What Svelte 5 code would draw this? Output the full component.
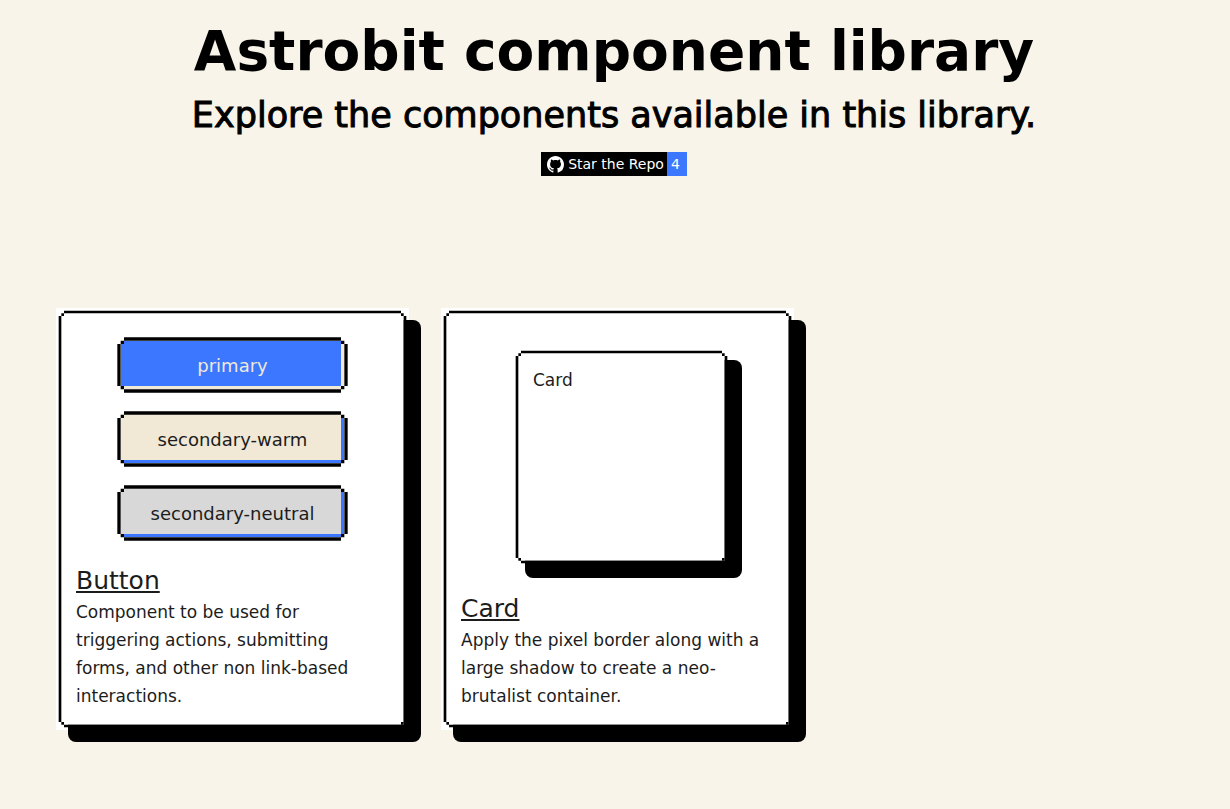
<script>
  const buttons = ['primary', 'secondary-warm', 'secondary-neutral'];
</script>

<main>
  <header>
    <h1>Astrobit component library</h1>
    <p class="lead">Explore the components available in this library.</p>
    <a class="badge" href="#repo">
      <span class="label">
        <svg viewBox="0 0 16 16" width="17" height="17" aria-hidden="true">
          <path fill="#fff" d="M8 0C3.58 0 0 3.58 0 8c0 3.54 2.29 6.53 5.47 7.59.4.07.55-.17.55-.38 0-.19-.01-.82-.01-1.49-2.01.37-2.53-.49-2.69-.94-.09-.23-.48-.94-.82-1.13-.28-.15-.68-.52-.01-.53.63-.01 1.08.58 1.23.82.72 1.21 1.87.87 2.33.66.07-.52.28-.87.51-1.07-1.78-.2-3.64-.89-3.64-3.95 0-.87.31-1.59.82-2.15-.08-.2-.36-1.02.08-2.12 0 0 .67-.21 2.2.82.64-.18 1.32-.27 2-.27s1.36.09 2 .27c1.53-1.04 2.2-.82 2.2-.82.44 1.1.16 1.92.08 2.12.51.56.82 1.27.82 2.15 0 3.07-1.87 3.75-3.65 3.95.29.25.54.73.54 1.48 0 1.07-.01 1.93-.01 2.2 0 .21.15.46.55.38A8.01 8.01 0 0 0 16 8c0-4.42-3.58-8-8-8z" />
        </svg>
        Star the Repo
      </span>
      <span class="count">4</span>
    </a>
  </header>

  <section class="grid">
    <article class="card">
      <div class="buttons">
        {#each buttons as name}
          <button class="pixel {name}" type="button">{name}</button>
        {/each}
      </div>
      <h2><a href="#button">Button</a></h2>
      <p class="description">Component to be used for triggering actions, submitting forms, and other non link-based interactions.</p>
    </article>

    <article class="card">
      <div class="nested">
        <div class="card small">Card</div>
      </div>
      <h2><a href="#card">Card</a></h2>
      <p class="description">Apply the pixel border along with a large shadow to create a neo-brutalist container.</p>
    </article>
  </section>
</main>

<style>
  :global(body) {
    margin: 0;
    background: #f8f4e9;
  }
  main {
    font-family: 'DejaVu Sans', sans-serif;
    font-size: 17px;
    line-height: 28px;
    color: #1c1c1c;
  }
  header {
    display: flex;
    flex-direction: column;
    align-items: center;
    padding: 16px 18px 132px 16px;
    color: #000;
    text-align: center;
  }
  h1,
  h2,
  p {
    margin: 0;
    font-weight: 400;
  }
  h1 {
    font-size: 55px;
    line-height: 70px;
    font-weight: 700;
  }
  .lead {
    font-size: 35px;
    line-height: 58px;
    margin-bottom: 8px;
    -webkit-text-stroke: 1px #000;
  }
  .badge {
    display: flex;
    font-size: 14px;
    line-height: 24px;
    color: #fff;
    text-decoration: none;
  }
  .label {
    display: flex;
    align-items: center;
    gap: 4px;
    padding: 0 3px 0 6px;
    background: #000;
  }
  .count {
    padding: 0 7px 0 4px;
    background: #3b77ff;
  }
  .grid {
    display: grid;
    grid-template-columns: repeat(3, 1fr);
    gap: 32px;
    padding: 0 51px 67px 56px;
  }
  .card {
    position: relative;
    z-index: 0;
    padding: 20px;
    background: #fff;
  }
  .card::before {
    content: '';
    position: absolute;
    z-index: -1;
    inset: 12px -12px -12px 12px;
    border-radius: 8px;
    background: #000;
  }
  .card::after {
    content: '';
    position: absolute;
    z-index: -1;
    inset: 0;
    border: 8px solid transparent;
    border-image: url("data:image/svg+xml,%3Csvg xmlns='http://www.w3.org/2000/svg' width='9' height='9'%3E%3Cpath fill='%23fff' d='M2 2h5v5h-5z'/%3E%3Cpath d='M3 1h3v1h-3zM3 7h3v1h-3zM1 3h1v3h-1zM7 3h1v3h-1zM2 2h1v1h-1zM6 2h1v1h-1zM2 6h1v1h-1zM6 6h1v1h-1z'/%3E%3C/svg%3E") 3 fill / 8px stretch;
  }
  .buttons {
    display: flex;
    flex-direction: column;
    gap: 12px;
    padding: 6px 38px 23px;
  }
  .pixel {
    --fill: #3b77ff;
    --edge: #3b77ff;
    height: 62px;
    padding: 2px 0 0;
    font: inherit;
    font-size: 18px;
    white-space: nowrap;
    color: #1c1c1c;
    border: 10px solid transparent;
    border-image: url("data:image/svg+xml,%3Csvg xmlns='http://www.w3.org/2000/svg' width='9' height='9'%3E%3Cpath d='M3 1h3v1h-3zM3 7h3v1h-3zM1 3h1v3h-1zM7 3h1v3h-1zM2 2h1v1h-1zM6 2h1v1h-1zM2 6h1v1h-1zM6 6h1v1h-1z'/%3E%3C/svg%3E") 3 / 10px stretch;
    background:
      linear-gradient(var(--fill), var(--fill)) 7px 7px / calc(100% - 17px) calc(100% - 17px) no-repeat border-box,
      linear-gradient(var(--edge), var(--edge)) 7px 7px / calc(100% - 14px) calc(100% - 14px) no-repeat border-box;
  }
  .primary {
    --edge: #f1e8d6;
    color: #f1e8d6;
  }
  .secondary-warm {
    --fill: #f1e8d6;
  }
  .secondary-neutral {
    --fill: #d8d8d8;
  }
  .nested {
    padding: 20px 44px 29px 52px;
  }
  .small {
    min-height: 178px;
    line-height: 24px;
  }
  h2 {
    margin-bottom: 3px;
    font-size: 25px;
  }
  h2 a {
    color: inherit;
    text-decoration-thickness: 2px;
    text-underline-offset: 2px;
  }
  .description {
    padding-right: 8px;
  }
</style>
